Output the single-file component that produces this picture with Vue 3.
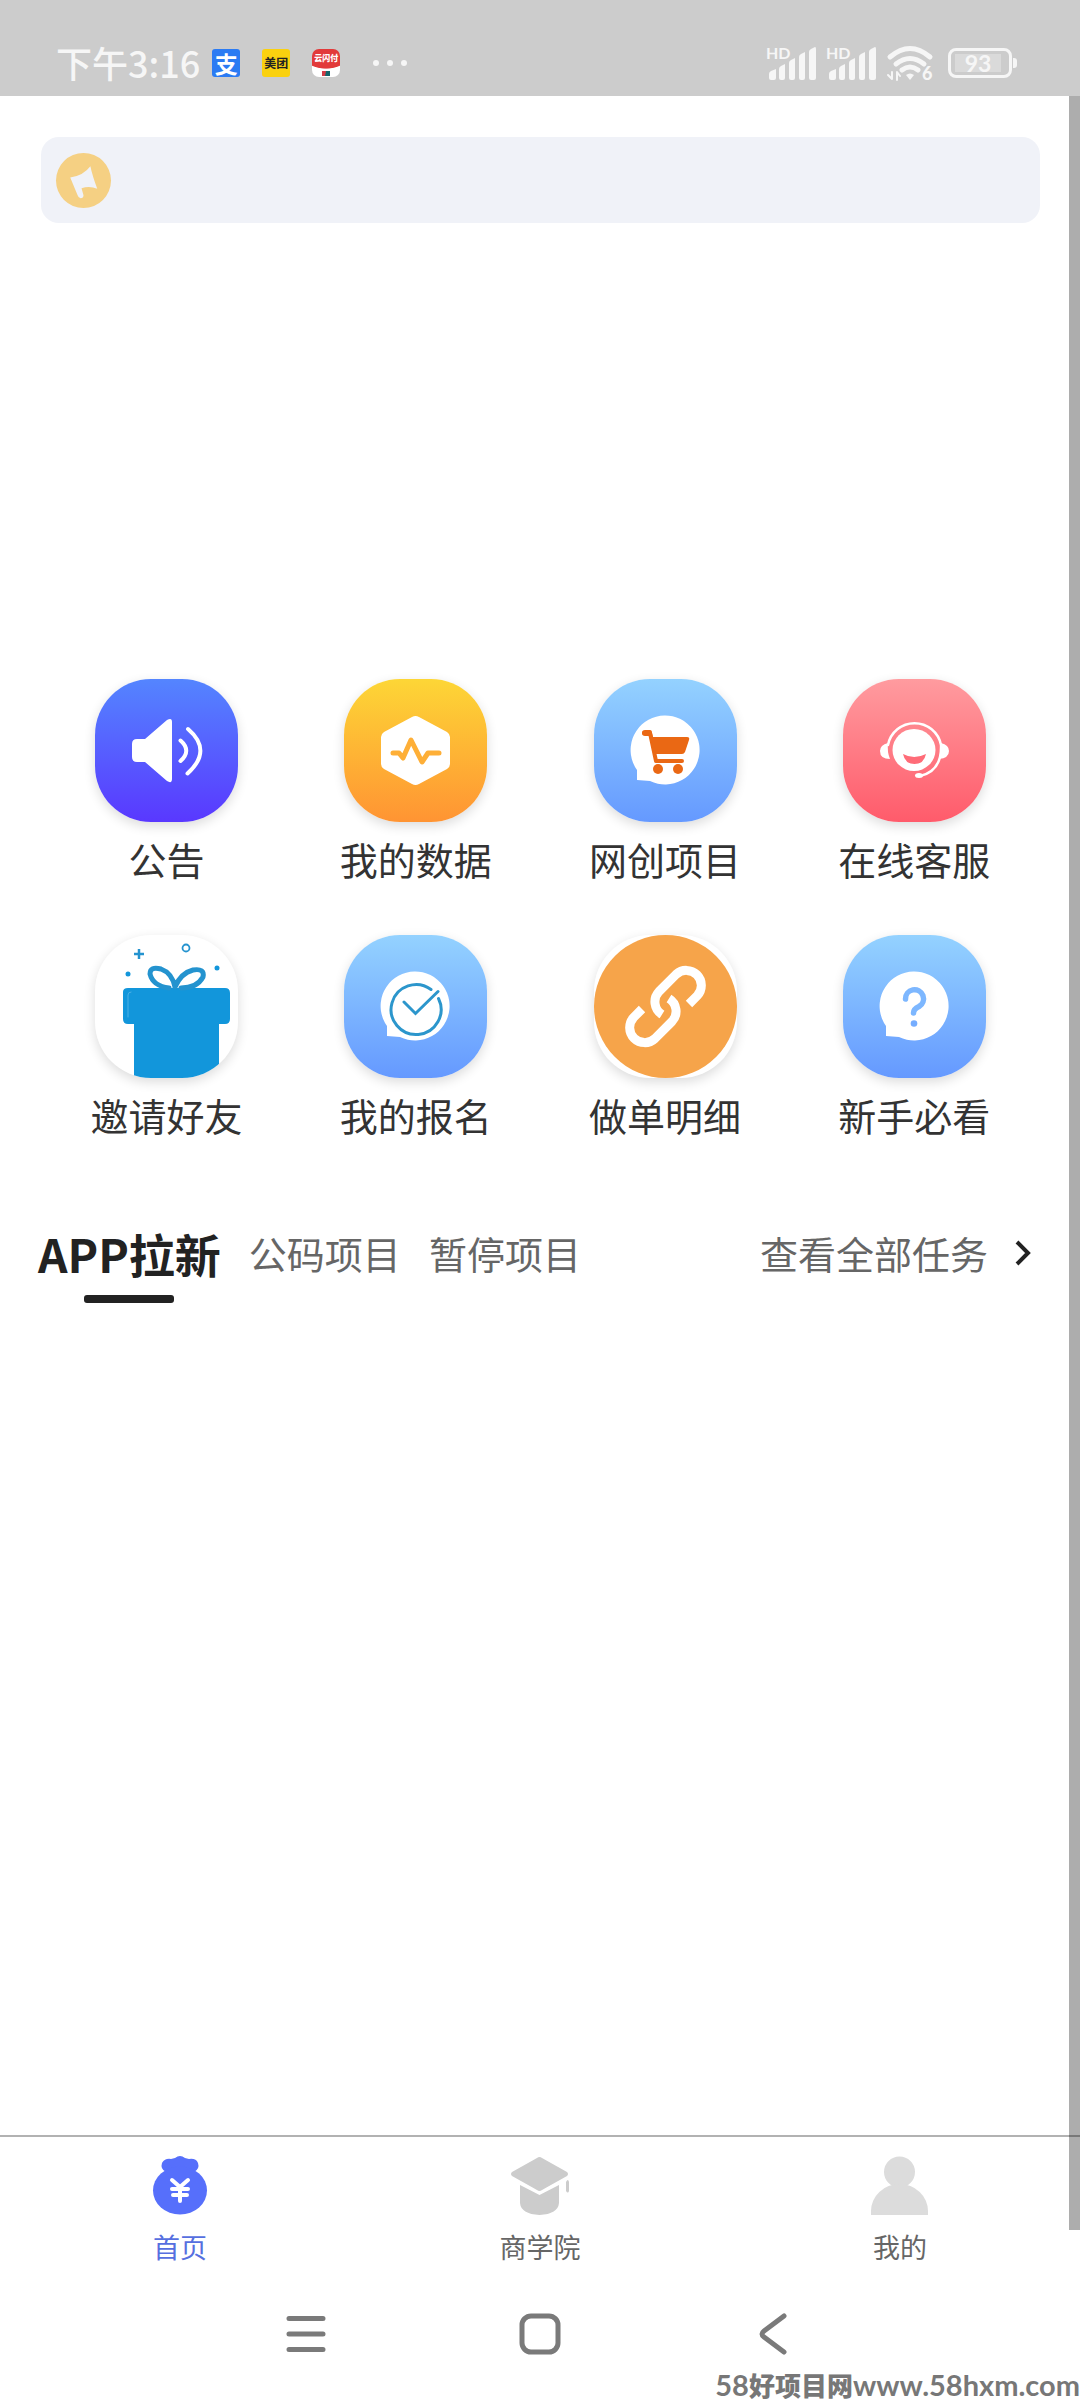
<script setup>
import { ref } from 'vue'

const shortcuts = [
  { id: 'notice', label: '公告', tone: 'indigo' },
  { id: 'data', label: '我的数据', tone: 'amber' },
  { id: 'shop', label: '网创项目', tone: 'sky' },
  { id: 'service', label: '在线客服', tone: 'rose' },
  { id: 'invite', label: '邀请好友', tone: 'plain' },
  { id: 'signup', label: '我的报名', tone: 'sky' },
  { id: 'detail', label: '做单明细', tone: 'plain' },
  { id: 'guide', label: '新手必看', tone: 'sky' },
]

const categories = ['APP拉新', '公码项目', '暂停项目']
const category = ref('APP拉新')

const pages = [
  { id: 'home', label: '首页' },
  { id: 'school', label: '商学院' },
  { id: 'mine', label: '我的' },
]
const page = ref('home')
</script>

<template>
  <div class="screen">
    <header class="status">
      <span class="time">下午3:16</span>
      <span class="app alipay">支</span>
      <span class="app meituan">美团</span>
      <span class="app unionpay"><b>云闪付</b></span>
      <svg class="dots" width="36" height="8" viewBox="0 0 36 8" fill="#f6f6f6">
        <circle cx="4" cy="4" r="3" /><circle cx="18" cy="4" r="3" /><circle cx="32" cy="4" r="3" />
      </svg>
      <div class="signals">
        <svg v-for="n in 2" :key="n" width="51" height="36" viewBox="0 0 51 36" fill="#f6f6f6">
          <text x="0" y="14" class="hd">HD</text>
          <path d="M3 33v-4q0-2 2-3l5-2v9q0 2-2 2h-3q-2 0-2-2zM13 24q0-2 2-3l4-2v14q0 2-2 2h-2q-2 0-2-2zM23 18q0-2 2-3l4-2v20q0 2-2 2h-2q-2 0-2-2zM33 12q0-2 2-3l4-2v26q0 2-2 2h-2q-2 0-2-2zM43 7q0-2 2-3l4-2q1 0 1 2v29q0 2-2 2h-3q-2 0-2-2z" />
        </svg>
        <svg width="48" height="36" viewBox="0 0 48 36" fill="none" stroke="#f6f6f6" stroke-width="5" stroke-linecap="round">
          <path d="M4 12Q24-5 44 12M10 19q14-11 28 0M16 25q8-6 16 0" />
          <path d="M20 30q4-3 8 0l-4 5z" fill="#f6f6f6" stroke="none" />
          <path d="M6 27v7l-4-4M11 35v-8l3 4" stroke-width="2" stroke-linejoin="round" />
          <text x="36" y="35" class="six">6</text>
        </svg>
      </div>
      <div class="battery"><span>93</span></div>
    </header>

    <main class="content">
      <section class="ticker" aria-label="公告栏">
        <svg width="55" height="55" viewBox="0 0 56 56">
          <circle cx="28" cy="28" r="28" fill="#f5d083" />
          <path d="M14.500 25Q28 23 35 13.500Q37 23 42 36.500Q34 33 26 36L28 43Q28 46 25 46Q23 46 22 43Z" fill="#f0f2f8" />
        </svg>
      </section>

      <section class="banner" aria-label="轮播图"></section>

      <nav class="shortcuts">
        <button v-for="item in shortcuts" :key="item.id" type="button" class="shortcut">
          <span class="tile" :class="item.tone">
            <svg viewBox="0 0 143 143" fill="#fff" stroke-linecap="round" stroke-linejoin="round">
              <g v-if="item.id === 'notice'">
                <path d="M42 60H50L72 41Q77 38 77 43V100Q77 105 72 102L50 83H42Q37 83 37 78V65Q37 60 42 60Z" />
                <path d="M85.500 61.500Q97 71.500 85.500 82M93 50Q118 71.500 92.500 94.500" fill="none" stroke="#fff" stroke-width="4" />
              </g>
              <g v-else-if="item.id === 'data'">
                <path d="M68 38Q71.500 36 75 38L103 53Q106 55 106 58V85Q106 88 103 90L75 105Q71.500 107 68 105L40 90Q37 88 37 85V58Q37 55 40 53Z" />
                <path d="M49 74H55L59 79L67 61L78 83L84 74H95" fill="none" stroke="#feaf37" stroke-width="5" />
              </g>
              <g v-else-if="item.id === 'shop'">
                <path d="M43 101V91A34.500 34.500 0 1 1 56 102Z" />
                <path d="M50 54H56L62 82H88" fill="none" stroke="#ea6814" stroke-width="4" />
                <path d="M48 54Q48 51 51 51H56Q58 51 58 54L59 58H93Q96 58 95 61L91 73Q90 75 88 75H60L56 57H51Q48 57 48 54Z" fill="#ea6814" />
                <circle cx="64" cy="90" r="5" fill="#ea6814" /><circle cx="84" cy="90" r="5" fill="#ea6814" />
              </g>
              <g v-else-if="item.id === 'service'">
                <ellipse cx="71" cy="71" rx="21.500" ry="21" />
                <path d="M60 75Q71 81 83 75Q81 85 71.500 85Q62 85 60 75Z" fill="#ff6c78" />
                <path d="M45 66A27 27 0 0 1 98 66Q99 92 77 97" fill="none" stroke="#fff" stroke-width="2.500" />
                <path d="M45 64Q37 66 37 72Q37 80 47 80Q44 73 45 64ZM98 64Q106 66 106 72Q106 79 96 80Q98 74 98 64Z" />
                <ellipse cx="76" cy="96.500" rx="4" ry="2.500" />
              </g>
              <g v-else-if="item.id === 'invite'" fill="#1296db">
                <path d="M28 57Q28 53 33 53H130Q135 53 135 58V84Q135 89 130 89H124V143H39V89H33Q28 89 28 84Z" />
                <path d="M33 82V60Q33 57 36 57" fill="none" stroke="#4db0e4" stroke-width="1" />
                <path d="M80 52Q77 38 66 34Q55 31 55 39Q58 51 74 53M80 52Q86 38 98 35Q110 33 108 42Q102 53 86 53" fill="none" stroke="#2493cf" stroke-width="5" />
                <path d="M44 14V24M39 19H49" fill="none" stroke="#2493cf" stroke-width="2.500" stroke-linecap="butt" />
                <circle cx="91" cy="13" r="3.500" fill="none" stroke="#2493cf" stroke-width="1.800" />
                <circle cx="33" cy="39" r="2.500" /><circle cx="122" cy="33" r="2.500" />
              </g>
              <g v-else-if="item.id === 'signup'">
                <path d="M43 101V91A34.500 34.500 0 1 1 56 102Z" />
                <path d="M87 54.500A25 25 0 1 0 94.500 63.500M60 67L71.500 78.500L94 56.500" fill="none" stroke="#2c96cc" stroke-width="3" stroke-linejoin="miter" />
              </g>
              <g v-else-if="item.id === 'detail'">
                <circle cx="71.500" cy="71.500" r="71.500" fill="#f6a44a" />
                <g fill="none" stroke="#fff" stroke-width="9" stroke-linecap="butt">
                  <path d="M95 69L103.300 60.600A15 15 0 0 0 82.100 39.400L65 56.500A15 15 0 0 0 68 79.500" />
                  <path d="M95 69L103.300 60.600A15 15 0 0 0 82.100 39.400L65 56.500A15 15 0 0 0 68 79.500" transform="rotate(180 71.500 71.500)" />
                </g>
              </g>
              <g v-else>
                <path d="M43 101V91A34.500 34.500 0 1 1 56 102Z" />
                <path d="M62.500 64A9 9 0 1 1 76 71.500Q70.500 74 70.500 78" fill="none" stroke="#7db7ff" stroke-width="5.500" />
                <circle cx="71" cy="88.500" r="3.300" fill="#75adff" />
              </g>
            </svg>
          </span>
          <span class="caption">{{ item.label }}</span>
        </button>
      </nav>

      <section class="tasks">
        <div class="categories" role="tablist">
          <button
            v-for="name in categories"
            :key="name"
            type="button"
            role="tab"
            class="category"
            :class="{ active: name === category }"
            :aria-selected="name === category"
            @click="category = name"
          >{{ name }}</button>
        </div>
        <a class="more" href="#tasks">
          查看全部任务
          <svg width="18" height="28" viewBox="0 0 18 28" fill="none" stroke="#222" stroke-width="4">
            <path d="M3 3L14 14L3 25" />
          </svg>
        </a>
      </section>
    </main>

    <nav class="tabbar">
      <button
        v-for="item in pages"
        :key="item.id"
        type="button"
        class="tab"
        :class="{ current: item.id === page }"
        @click="page = item.id"
      >
        <svg width="60" height="60" viewBox="0 0 60 60">
          <g v-if="item.id === 'home'">
            <path d="M16 16Q10 13 12 7Q15 2 21 3L25 2Q30-2 35 2L39 3Q46 2 48 7Q50 13 44 16Z" fill="#566ffb" />
            <ellipse cx="30" cy="34.500" rx="27" ry="24" fill="#566ffb" />
            <path d="M22 24L30 31L38 24M22 33H38M23 39H37M30 31V45" fill="none" stroke="#fff" stroke-width="4" stroke-linecap="round" />
          </g>
          <g v-else-if="item.id === 'school'" fill="#ccc">
            <path d="M27 2Q29.500 0 32 2L57 16Q59 18 57 20L32 34Q29.500 36 27 34L2 20Q0 18 2 16Z" />
            <path d="M10 29L29.500 39L49 29V47Q48 58 29.500 59Q11 58 10 47ZM56 26Q58 22 59 26V35Q58 38 56 35Z" />
          </g>
          <g v-else fill="#dcdcdc">
            <ellipse cx="29.500" cy="16" rx="15.500" ry="15.500" />
            <path d="M1 59V55A28.500 27 0 0 1 58 55V59Z" />
          </g>
        </svg>
        <span>{{ item.label }}</span>
      </button>
    </nav>

    <footer class="system">
      <button type="button" aria-label="最近任务">
        <svg width="42" height="42" viewBox="0 0 42 42"><path d="M4 5.500H38M4 21H38M4 36.500H38" /></svg>
      </button>
      <button type="button" aria-label="主屏幕">
        <svg width="42" height="42" viewBox="0 0 42 42"><rect x="3" y="3" width="36" height="36" rx="9" /></svg>
      </button>
      <button type="button" aria-label="返回">
        <svg width="42" height="42" viewBox="0 0 42 42"><path d="M31 3L11 18Q7 21 11 24L31 39" /></svg>
      </button>
      <span class="watermark">58<b>好项目网</b>www.58hxm.com</span>
    </footer>

    <div class="scrollbar"></div>
  </div>
</template>

<style>
body {
  margin: 0;
  background: #fff;
}
</style>

<style scoped>
.screen {
  position: relative;
  display: flex;
  flex-direction: column;
  min-height: 100vh;
  background: #fff;
  color: #333;
  font-family: "Noto Sans CJK SC", sans-serif;
}
button {
  padding: 0;
  border: 0;
  background: none;
  color: inherit;
  font: inherit;
}
svg {
  display: block;
  overflow: visible;
}

.status {
  display: flex;
  align-items: center;
  box-sizing: border-box;
  height: 96px;
  padding: 30px 68px 0 56px;
  background: #ccc;
  color: #f6f6f6;
}
.time {
  margin-right: 12px;
  padding-bottom: 2px;
  font-size: 36px;
  font-weight: 500;
  line-height: 56px;
}
.app {
  width: 28px;
  height: 28px;
  margin-right: 22px;
  border-radius: 3px;
  font-weight: 700;
  line-height: 28px;
  text-align: center;
  white-space: nowrap;
}
.alipay {
  background: #2b7bf3;
  color: #fff;
  font-size: 23px;
}
.meituan {
  background: #fad10f;
  color: #222;
  font-size: 12px;
}
.unionpay {
  border-radius: 7px;
  background:
    linear-gradient(100deg, #d23b45 40%, #14646a 50%) 10px 22px / 8px 5px no-repeat,
    radial-gradient(ellipse 27px 20px at 50% 0, #e23a3a 96%, #fff 100%);
  color: #fff;
  font-size: 8px;
  line-height: 18px;
}
.dots {
  margin-left: 10px;
}
.signals {
  display: flex;
  gap: 9px;
  margin-left: auto;
}
.signals text {
  stroke: none;
  fill: #f6f6f6;
  font-family: Lato, sans-serif;
  font-weight: 700;
}
.hd {
  font-size: 16px;
}
.signals .six {
  font-size: 18px;
  font-weight: 900;
}
.battery {
  position: relative;
  box-sizing: border-box;
  width: 64px;
  height: 30px;
  margin-left: 14px;
  padding: 3px 4px;
  border: 3px solid #f6f6f6;
  border-radius: 8px;
}
.battery span {
  display: block;
  width: 46px;
  background: #dadada;
  font-family: Lato, sans-serif;
  font-size: 23px;
  font-weight: 700;
  line-height: 18px;
  text-align: center;
}
.battery::after {
  content: "";
  position: absolute;
  top: 7px;
  right: -8px;
  width: 4px;
  height: 10px;
  border-radius: 0 3px 3px 0;
  background: #f6f6f6;
}

.content {
  flex: 1;
  padding: 41px 40px 0 41px;
}
.ticker {
  display: flex;
  align-items: center;
  height: 86px;
  padding-left: 15px;
  border-radius: 18px;
  background: #f0f2f8;
}
.banner {
  height: 456px;
}
.shortcuts {
  display: grid;
  grid-template-columns: repeat(4, 1fr);
  row-gap: 48px;
  padding: 0 1px;
}
.shortcut {
  display: flex;
  flex-direction: column;
  align-items: center;
  gap: 9px;
}
.tile {
  width: 143px;
  height: 143px;
  border-radius: 56px;
  overflow: hidden;
  box-shadow: 0 4px 12px rgba(0, 0, 0, 0.14);
}
.indigo {
  background: linear-gradient(#5485ff, #5938ff);
}
.amber {
  background: linear-gradient(#fdd636, #ff9433);
}
.sky {
  background: linear-gradient(#94d2ff, #6599ff);
}
.rose {
  background: linear-gradient(#ff9b9f, #ff5b6b);
}
.plain {
  background: #fff;
}
.caption {
  font-size: 38px;
  line-height: 56px;
}

.tasks {
  display: flex;
  align-items: center;
  justify-content: space-between;
  margin-top: 77px;
  color: #666;
  font-size: 38px;
  line-height: 66px;
}
.categories {
  display: flex;
  gap: 28px;
  margin-left: -3px;
}
.category.active {
  position: relative;
  color: #222;
  font-size: 46px;
  font-weight: 700;
}
.category.active::after {
  content: "";
  position: absolute;
  bottom: -17px;
  left: 50%;
  width: 90px;
  height: 8px;
  margin-left: -45px;
  border-radius: 3px;
  background: #222;
}
.more {
  display: flex;
  align-items: center;
  gap: 26px;
  margin-right: 8px;
  color: inherit;
  text-decoration: none;
}

.tabbar {
  display: flex;
  border-top: 2px solid #b2b2b2;
}
.tab {
  display: flex;
  flex: 1;
  flex-direction: column;
  align-items: center;
  gap: 11px;
  padding: 19px 0 7px;
  color: #666;
  font-size: 27px;
  line-height: 40px;
}
.current {
  color: #566fe0;
}

.system {
  position: relative;
  display: flex;
  justify-content: center;
  gap: 192px;
  height: 87px;
  padding-top: 39px;
}
.system button {
  height: 42px;
}
.system svg {
  fill: none;
  stroke: #7a7a7a;
  stroke-width: 5;
  stroke-linecap: round;
}
.watermark {
  position: absolute;
  right: 0;
  bottom: 0;
  color: #777;
  font-family: Lato, "Noto Sans CJK SC", sans-serif;
  font-size: 29px;
  font-weight: 700;
  line-height: 28px;
  white-space: nowrap;
}
.watermark b {
  font-size: 26px;
  font-weight: 900;
}
.scrollbar {
  position: absolute;
  top: 96px;
  right: 0;
  bottom: 170px;
  width: 11px;
  background: rgba(0, 0, 0, 0.32);
}
</style>
